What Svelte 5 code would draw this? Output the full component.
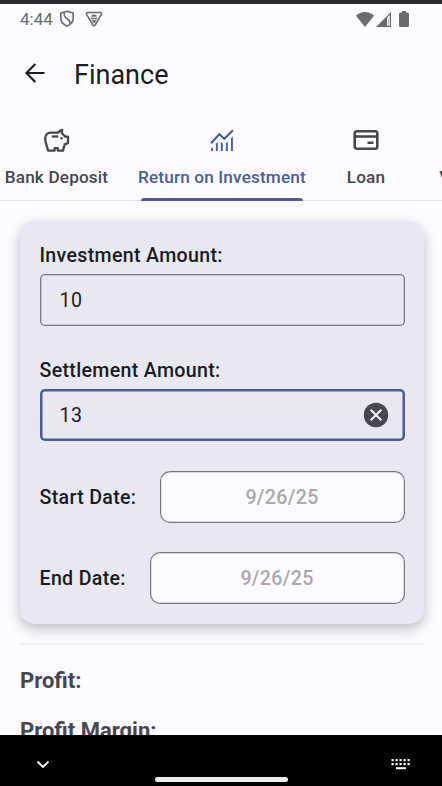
<script lang="ts">
    type TabId = 'deposit' | 'roi' | 'loan' | 'vat';

    const tabs: { id: TabId; label: string }[] = [
        { id: 'deposit', label: 'Bank Deposit' },
        { id: 'roi', label: 'Return on Investment' },
        { id: 'loan', label: 'Loan' },
        { id: 'vat', label: 'VAT' },
    ];

    let active = $state<TabId>('roi');
    let investment = $state('10');
    let settlement = $state('13');
    let startDate = $state('9/26/25');
    let endDate = $state('9/26/25');
</script>

<div class="screen">
    <div class="status">
        <span class="time">4:44</span>
        <svg class="shield" width="16" height="18" viewBox="0 0 16 18" fill="none" stroke="#6b6a6e" stroke-width="1.6">
            <path d="M8 1.2 14.2 3v5c0 4-2.6 6.7-6.2 8.2C4.4 14.7 1.8 12 1.8 8V3Z" stroke-linejoin="round" />
            <path d="M5 2.5c0 4 1 5 3.5 6.5 2 1.2 2.7 3 2.7 5" />
        </svg>
        <svg class="bug" width="18" height="16" viewBox="0 0 18 16">
            <path d="M2.6 1.500h12.800c1 0 1.400 1 1 1.800L10.200 14c-.6 1-1.800 1-2.400 0L1.600 3.300c-.4-.8 0-1.800 1-1.800Z" fill="none" stroke="#6b6a6e" stroke-width="1.6" />
            <path d="M6.200 5.800a2.800 2.300 0 0 1 5.600 0ZM5.800 6.800h6.400v1.500H5.800ZM6.500 9.200h5L9 12.800Z" fill="#6b6a6e" />
        </svg>
        <div class="system">
            <svg width="18" height="15" viewBox="0 0 18 15"><path d="M0 3.800C5-1.200 13-1.200 18 3.800L9 15Z" fill="#6b6a6e" /></svg>
            <svg class="signal" width="16" height="15" viewBox="0 0 16 15">
                <path d="M0 15 15 0v15Z" fill="#6b6a6e" />
                <path d="M11 5.500 13.800 3v10.800H11Z" fill="#fdfbff" />
                <path d="M12.200 5.500v8" stroke="#6b6a6e" stroke-width="0.5" />
            </svg>
            <svg class="battery" width="10" height="16" viewBox="0 0 10 16"><path d="M3 0h4v1.500h1.500A1.500 1.500 0 0 1 10 3v11.500a1.500 1.500 0 0 1-1.500 1.500h-7A1.500 1.500 0 0 1 0 14.500V3a1.500 1.500 0 0 1 1.500-1.500H3Z" fill="#6b6a6e" /></svg>
        </div>
    </div>

    <header>
        <button class="back" aria-label="Back">
            <svg width="20" height="20" viewBox="0 0 20 20" fill="none" stroke="#1b1b21" stroke-width="2.2">
                <path d="M19.500 10H2M10.300 1 1.500 10l8.800 9" />
            </svg>
        </button>
        <h1>Finance</h1>
    </header>

    <nav>
        {#each tabs as tab (tab.id)}
            <button class="tab {tab.id}" class:active={tab.id === active} onclick={() => (active = tab.id)}>
                <span class="icon">
                    {#if tab.id === 'deposit'}
                        <svg width="28" height="25" viewBox="0 0 28 25" fill="none" stroke="currentColor" stroke-width="2.3">
                            <path d="M5.200 22.600C3.500 17 2.200 14 2.200 10.200c0-3.400 2.500-5.500 5.600-5.500h7.400c1-1.600 2.200-2.600 4-2.900-.4 1.400-.4 2.500-.2 3.500l3.200 3.300H25v6.500l-3.300 1.200-1.700 6.300h-5.200v-2.500h-3.200v2.500Z" stroke-linejoin="round" />
                            <path d="M8.800 8.500h6.400" />
                            <circle cx="18.600" cy="10.300" r="1.300" fill="currentColor" stroke="none" />
                        </svg>
                    {:else if tab.id === 'roi'}
                        <svg width="24" height="24" viewBox="0 0 24 24" fill="none" stroke="currentColor">
                            <path d="M1 15.300 9.300 6.300l5 4.500 8.700-8.600" stroke-width="2.2" />
                            <path d="M1 20.800 2.900 19v4H1ZM5.900 15.700l1.900-2V23H5.900ZM10.900 13.700l1.900 1.800V23h-1.900ZM15.900 15.300l1.900-1.900V23h-1.900ZM21 10.300l1.900-1.900V23H21Z" fill="currentColor" stroke="none" />
                        </svg>
                    {:else if tab.id === 'loan'}
                        <svg width="26" height="22" viewBox="0 0 26 22" fill="none" stroke="currentColor" stroke-width="2.6">
                            <rect x="1.700" y="2.200" width="22.600" height="17.600" rx="2.200" />
                            <path d="M1.500 7.500h23M14.500 13.800h6" />
                        </svg>
                    {/if}
                </span>
                <span class="label">{tab.label}</span>
            </button>
        {/each}
    </nav>

    <main>
        <section class="card">
            <label for="investment">Investment Amount:</label>
            <div class="field">
                <input id="investment" bind:value={investment} />
            </div>

            <label for="settlement">Settlement Amount:</label>
            <div class="field focused">
                <input id="settlement" bind:value={settlement} />
                <button class="clear" aria-label="Clear" onclick={() => (settlement = '')}>
                    <svg width="26" height="26" viewBox="0 0 26 26">
                        <circle cx="13" cy="13" r="12.200" fill="#46464f" />
                        <path d="m7.700 7.700 10.600 10.600M18.300 7.700 7.700 18.300" stroke="#e8e8f2" stroke-width="2.3" />
                    </svg>
                </button>
            </div>

            <div class="row">
                <span>Start Date:</span>
                <button class="date start">{startDate}</button>
            </div>
            <div class="row">
                <span>End Date:</span>
                <button class="date end">{endDate}</button>
            </div>
        </section>

        <hr />

        <p class="result">Profit:</p>
        <p class="result">Profit Margin:</p>
    </main>

    <footer>
        <svg class="down" width="14" height="9" viewBox="0 0 14 9" fill="none" stroke="#fff" stroke-width="1.8"><path d="m1.500 1.500 5.500 5.500 5.500-5.500" /></svg>
        <div class="handle"></div>
        <svg class="keyboard" width="20" height="12" viewBox="0 0 20 12" fill="#fff">
            {#each [0, 1, 2, 3, 4] as col}
                <rect x={0.5 + col * 4} y="1" width="2.200" height="2.200" />
                <rect x={0.5 + col * 4} y="5" width="2.200" height="2.200" />
            {/each}
            <rect x="5" y="9.200" width="10" height="2" />
        </svg>
    </footer>
</div>

<style>
    :global(body) {
        background: #fdfbff;
    }
    .screen {
        box-sizing: border-box;
        display: flex;
        flex-direction: column;
        width: 442px;
        height: 786px;
        overflow: hidden;
        border-top: 4px solid #2a2a32;
        background: #fdfbff;
        color: #1b1b21;
        font-family: Roboto, sans-serif;
    }
    button {
        padding: 0;
        border: none;
        background: none;
        color: inherit;
        font: inherit;
        letter-spacing: inherit;
        cursor: pointer;
    }
    svg {
        display: block;
        flex-shrink: 0;
    }
    .status {
        display: flex;
        align-items: center;
        flex-shrink: 0;
        height: 30px;
        padding: 0 32px 0 20px;
        color: #6b6a6e;
    }
    .time {
        width: 39px;
        font-size: 17px;
        line-height: 30px;
    }
    .bug { margin-left: 10px; }
    .system {
        display: flex;
        align-items: center;
        margin-left: auto;
    }
    .signal { margin-left: 2px; }
    .battery { margin-left: 7px; margin-right: 1px; }
    header {
        display: flex;
        align-items: center;
        flex-shrink: 0;
        height: 78px;
        padding-left: 25px;
    }
    h1 {
        margin: 3px 0 0 29px;
        font-size: 27px;
        font-weight: 400;
        line-height: 34px;
    }
    nav {
        display: flex;
        flex-shrink: 0;
        height: 89px;
        margin-left: -10px;
        box-shadow: inset 0 -1px #e1e1ef;
    }
    .tab {
        position: relative;
        display: flex;
        flex-direction: column;
        align-items: center;
        flex-shrink: 0;
        width: 90px;
        color: #46464f;
    }
    .tab.deposit { width: 133px; }
    .tab.roi { width: 198px; }
    .tab.active { color: #495d92; }
    .tab.active::after {
        content: '';
        position: absolute;
        bottom: 0;
        left: 18px;
        right: 18px;
        height: 3px;
        border-radius: 3px 3px 0 0;
        background: #495d92;
    }
    .icon {
        display: flex;
        align-items: center;
        justify-content: center;
        height: 26px;
        margin-top: 15px;
    }
    .label {
        margin-top: 12px;
        font-size: 17.2px;
        font-weight: 500;
        line-height: 24px;
        letter-spacing: 0.15px;
        white-space: nowrap;
    }
    .vat .label {
        margin-left: -2px;
    }
    main {
        flex: 1;
        min-height: 0;
        overflow: hidden;
        padding: 20px 18px 0 20px;
    }
    .card {
        box-sizing: border-box;
        height: 403px;
        padding: 22px 19.5px 0;
        border-radius: 15px;
        background: #e8e8f2;
        box-shadow: 0 5px 13px rgba(0, 0, 0, 0.25);
        font-size: 19.6px;
        font-weight: 500;
        letter-spacing: 0.32px;
    }
    label {
        display: block;
        height: 31px;
        line-height: 25px;
    }
    .field {
        box-sizing: border-box;
        display: flex;
        align-items: center;
        height: 52px;
        margin-bottom: 32px;
        padding: 1px 16px 0 20px;
        border-radius: 5px;
        box-shadow: inset 0 0 0 1.3px #767680;
    }
    .field.focused {
        margin-bottom: 30px;
        box-shadow: inset 0 0 0 2.5px #495d92;
    }
    input {
        flex: 1;
        min-width: 0;
        padding: 0;
        border: none;
        outline: none;
        background: none;
        color: #1b1b21;
        font-family: inherit;
        font-size: 19.6px;
        letter-spacing: 0.61px;
    }
    .clear { margin-top: -1px; }
    .row {
        display: flex;
        align-items: center;
        justify-content: space-between;
        height: 52px;
        margin-bottom: 29px;
    }
    .date {
        box-sizing: border-box;
        height: 52px;
        border-radius: 10px;
        background: #fdfbff;
        box-shadow: inset 0 0 0 1.2px #767680;
        color: #a9a8ab;
    }
    .date.start { width: 245px; }
    .date.end { width: 255px; }
    hr {
        height: 2px;
        margin: 19px 0 23px;
        border: none;
        background: #f1f0f4;
    }
    .result {
        height: 25px;
        margin: 0 0 25px;
        color: #46464f;
        font-size: 22px;
        font-weight: 700;
        line-height: 25px;
    }
    footer {
        display: flex;
        flex-shrink: 0;
        box-sizing: border-box;
        height: 51px;
        padding: 0 31px 0 36px;
        background: #000;
    }
    .down { margin-top: 25px; }
    .handle {
        width: 133px;
        height: 5px;
        margin: 42px auto 0 105px;
        border-radius: 3px;
        background: #ececec;
    }
    .keyboard { margin-top: 23px; }
</style>
